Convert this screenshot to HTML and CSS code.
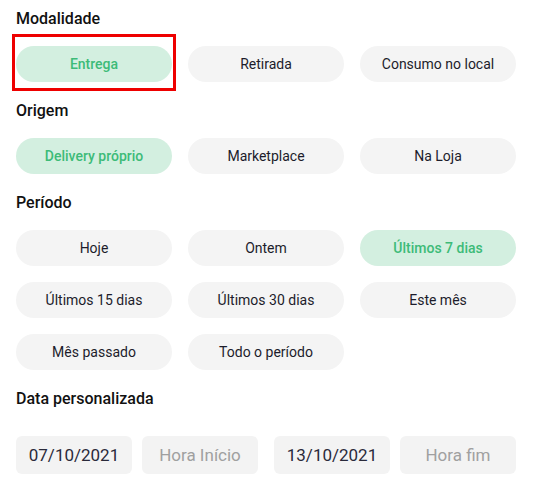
FILE: index.html
```html
<!DOCTYPE html>
<html lang="pt-BR">
<head>
    <meta charset="UTF-8">
    <meta name="viewport" content="width=device-width, initial-scale=1.0">
    <title>Filtros</title>
    <link rel="stylesheet" href="styles.css">
</head>
<body>
    <div class="filtros">
        <!-- Modalidade -->
        <section class="grupo">
            <h2>Modalidade</h2>
            <div class="opcoes">
                <button class="chip ativo">Entrega</button>
                <button class="chip">Retirada</button>
                <button class="chip">Consumo no local</button>
            </div>
            <div class="destaque"></div>
        </section>

        <!-- Origem -->
        <section class="grupo">
            <h2>Origem</h2>
            <div class="opcoes">
                <button class="chip ativo">Delivery próprio</button>
                <button class="chip">Marketplace</button>
                <button class="chip">Na Loja</button>
            </div>
        </section>

        <!-- Período -->
        <section class="grupo">
            <h2>Período</h2>
            <div class="opcoes">
                <button class="chip">Hoje</button>
                <button class="chip">Ontem</button>
                <button class="chip ativo">Últimos 7 dias</button>
                <button class="chip">Últimos 15 dias</button>
                <button class="chip">Últimos 30 dias</button>
                <button class="chip">Este mês</button>
                <button class="chip">Mês passado</button>
                <button class="chip">Todo o período</button>
            </div>
        </section>

        <!-- Data personalizada -->
        <section class="grupo">
            <h2 class="titulo-data">Data personalizada</h2>
            <div class="datas">
                <div class="par">
                    <input class="campo" type="text" value="07/10/2021">
                    <input class="campo" type="text" placeholder="Hora Início">
                </div>
                <div class="par">
                    <input class="campo" type="text" value="13/10/2021">
                    <input class="campo" type="text" placeholder="Hora fim">
                </div>
            </div>
        </section>
    </div>
</body>
</html>
```

FILE: styles.css
```css
body {
    margin: 0;
    font-family: Roboto, "Liberation Sans", sans-serif;
    background-color: #ffffff;
    color: #1c1c2b;
}
.filtros {
    padding: 9px 16px 0 16px;
}
.grupo {
    position: relative;
    margin-bottom: 19px;
}
h2 {
    margin: 0 0 17px 0;
    font-size: 16px;
    line-height: 20px;
    font-weight: 500;
    color: #111111;
}
.opcoes {
    display: grid;
    grid-template-columns: repeat(3, 156px);
    gap: 16px;
}
.chip {
    height: 36px;
    padding: 0;
    border: none;
    border-radius: 18px;
    background-color: #f4f4f4;
    color: #1c1c2b;
    font-family: inherit;
    font-size: 14px;
    cursor: pointer;
}
.chip.ativo {
    background-color: #d3efe0;
    color: #3dbb78;
    font-weight: 500;
}
/* marca vermelha sobre a primeira opção */
.destaque {
    position: absolute;
    left: -4px;
    top: 25px;
    width: 158px;
    height: 51px;
    border: 3px solid #ee0000;
}
.titulo-data {
    margin-bottom: 27px;
}
.datas {
    display: flex;
    gap: 16px;
}
.par {
    display: flex;
    gap: 10px;
}
.campo {
    width: 116px;
    height: 38px;
    box-sizing: border-box;
    border: none;
    border-radius: 6px;
    background-color: #f3f3f3;
    color: #2a2a3a;
    font-family: inherit;
    font-size: 17px;
    text-align: center;
    outline: none;
}
.campo::placeholder {
    color: #a0a0a0;
}
```
